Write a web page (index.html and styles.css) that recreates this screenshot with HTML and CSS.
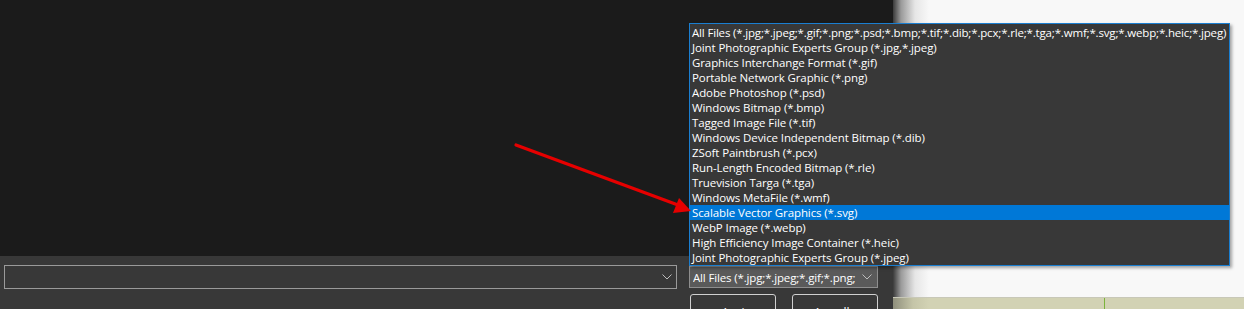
FILE: index.html
```html
<!DOCTYPE html>
<html lang="en">
<head>
    <meta charset="UTF-8">
    <title>Apri file</title>
    <link rel="stylesheet" href="styles.css">
</head>
<body>
    <div class="screen">
        <div class="dialog">
            <div class="dialog-body"></div>
            <div class="dialog-footer">
                <div class="name-box">
                    <svg class="chev" width="10" height="6" viewBox="0 0 10 6"><path d="M0.5 0.5 L5 5 L9.5 0.5" fill="none" stroke="#bdbdbd" stroke-width="1"/></svg>
                </div>
                <div class="side">
                    <div class="type-box">
                        <span class="type-text">All Files (*.jpg;*.jpeg;*.gif;*.png;</span>
                        <svg class="chev" width="10" height="6" viewBox="0 0 10 6"><path d="M0.5 0.5 L5 5 L9.5 0.5" fill="none" stroke="#bdbdbd" stroke-width="1"/></svg>
                    </div>
                    <div class="buttons">
                        <button class="btn">Apri</button>
                        <button class="btn">Annulla</button>
                    </div>
                </div>
            </div>
        </div>
        <div class="backdrop">
            <div class="backdrop-band"><span class="band-line"></span></div>
        </div>

        <!-- open list of the file type box -->
        <ul class="type-list">
            <li class="all">All Files (*.jpg;*.jpeg;*.gif;*.png;*.psd;*.bmp;*.tif;*.dib;*.pcx;*.rle;*.tga;*.wmf;*.svg;*.webp;*.heic;*.jpeg)</li>
            <li>Joint Photographic Experts Group (*.jpg,*.jpeg)</li>
            <li>Graphics Interchange Format (*.gif)</li>
            <li>Portable Network Graphic (*.png)</li>
            <li>Adobe Photoshop (*.psd)</li>
            <li>Windows Bitmap (*.bmp)</li>
            <li>Tagged Image File (*.tif)</li>
            <li>Windows Device Independent Bitmap (*.dib)</li>
            <li>ZSoft Paintbrush (*.pcx)</li>
            <li>Run-Length Encoded Bitmap (*.rle)</li>
            <li>Truevision Targa (*.tga)</li>
            <li>Windows MetaFile (*.wmf)</li>
            <li class="selected">Scalable Vector Graphics (*.svg)</li>
            <li>WebP Image (*.webp)</li>
            <li>High Efficiency Image Container (*.heic)</li>
            <li>Joint Photographic Experts Group (*.jpeg)</li>
        </ul>

        <svg class="pointer" width="190" height="80" viewBox="0 0 190 80">
            <line x1="6" y1="3" x2="168" y2="63" stroke="#e60000" stroke-width="3.2" stroke-linecap="round"/>
            <polygon points="181,69 163,71 169,56" fill="#e60000"/>
        </svg>
    </div>
</body>
</html>
```

FILE: styles.css
```css
* {
    box-sizing: border-box;
}
body {
    margin: 0;
    background: #1b1b1b;
    font-family: "Open Sans", "Noto Sans", sans-serif;
    font-size: 11.5px;
    color: #fff;
    overflow: hidden;
}
.screen {
    position: relative;
    display: flex;
    width: 1244px;
    height: 309px;
}
.dialog {
    width: 893px;
    display: flex;
    flex-direction: column;
}
.dialog-body {
    height: 256px;
    flex-shrink: 0;
    background: #1b1b1b;
}
.dialog-footer {
    flex: 1;
    min-height: 0;
    overflow: hidden;
    background: #383838;
    display: flex;
    align-items: flex-start;
    padding: 9px 0 0 4px;
    gap: 12px;
}
.name-box {
    width: 673px;
    height: 24px;
    border: 1px solid #9a9a9a;
    display: flex;
    align-items: center;
    justify-content: flex-end;
    padding-right: 4px;
}
.side {
    margin-top: 1px;
    width: 189px;
    display: flex;
    flex-direction: column;
    gap: 6px;
}
.type-box {
    height: 22px;
    background: #5a5a5a;
    border: 1px solid #8e8e8e;
    display: flex;
    align-items: center;
    padding: 0 5px 0 3px;
    gap: 5px;
}
.type-text {
    flex: 1;
    white-space: nowrap;
    overflow: hidden;
    font-size: 11.5px;
    letter-spacing: -0.15px;
}
.buttons {
    display: flex;
    justify-content: space-between;
    padding-left: 1px;
}
.btn {
    flex-shrink: 0;
    width: 86px;
    height: 30px;
    background: #383838;
    border: 1px solid #d0d0d0;
    border-radius: 3px;
    color: #fff;
    font-family: inherit;
    font-size: 12px;
    padding: 7px 0 0;
    line-height: 16px;
    vertical-align: top;
}
.backdrop {
    flex: 1;
    background: linear-gradient(to right, #3a3a3a 0, #9a9a9a 8px, #e6e6e6 22px, #f8f8f8 36px);
    display: flex;
    flex-direction: column;
    justify-content: flex-end;
}
.backdrop-band {
    position: relative;
    height: 12px;
    background: linear-gradient(to right, #8f8f7c 0, #c5c5a8 20px, #d2d2b4 36px);
    border-top: 1px solid #c8c8b8;
}
.band-line {
    position: absolute;
    left: 211px;
    top: 0;
    bottom: 0;
    width: 1px;
    background: #7bb33b;
}
.type-list {
    position: absolute;
    left: 689px;
    top: 23px;
    width: 541px;
    margin: 0;
    padding: 1px 0 0;
    list-style: none;
    background: #383838;
    border: 1px solid #1a7ed0;
    box-shadow: 2px 2px 3px rgba(0, 0, 0, 0.35);
}
.type-list li {
    height: 15px;
    line-height: 15px;
    padding-left: 2px;
    white-space: nowrap;
    letter-spacing: -0.1px;
}
.type-list li.all {
    letter-spacing: -0.17px;
}
.type-list li.selected {
    background: #0078d7;
}
.pointer {
    position: absolute;
    left: 510px;
    top: 142px;
}
```
